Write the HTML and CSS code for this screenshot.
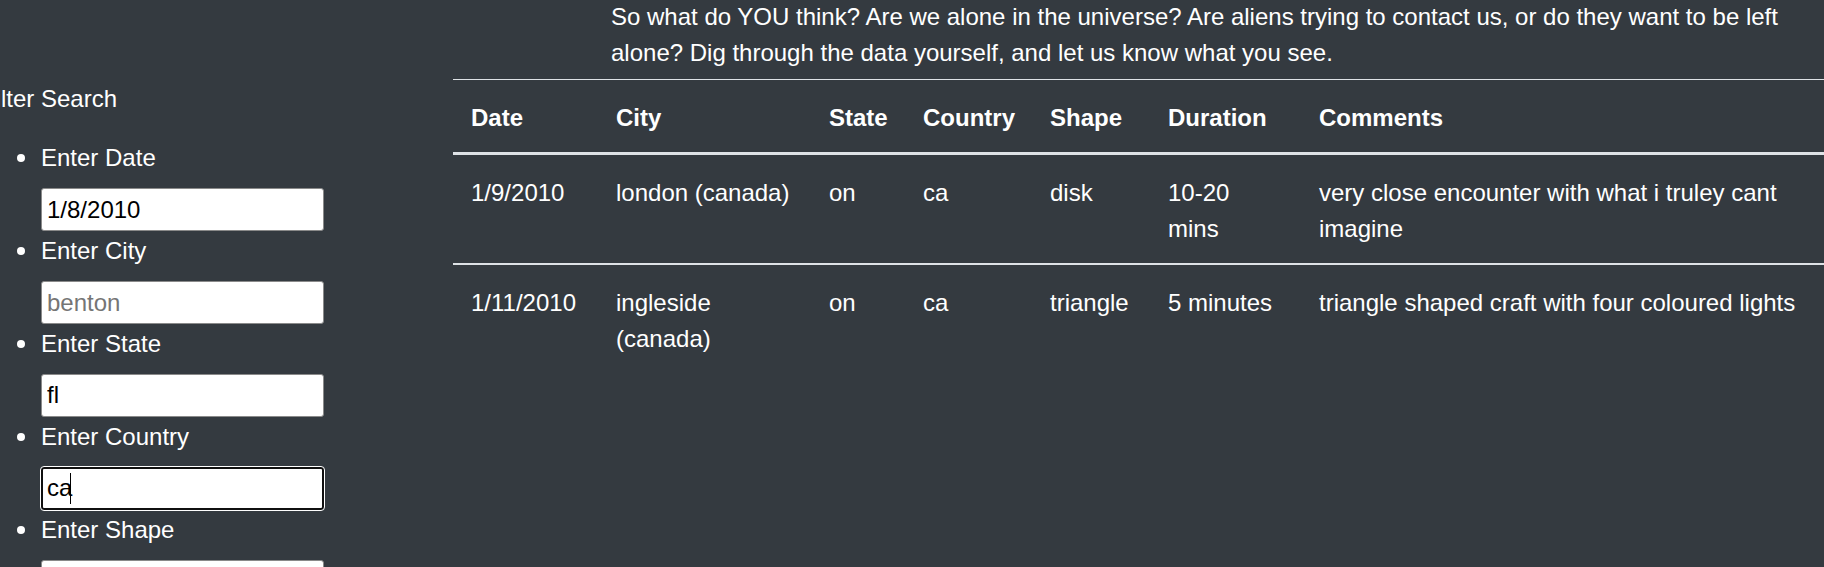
FILE: index.html
```html
<!DOCTYPE html>
<html lang="en">
<head>
<meta charset="utf-8">
<title>UFO Sightings</title>
<link rel="stylesheet" href="styles.css">
</head>
<body>
<div class="page">
  <section class="intro">
    <p>So what do YOU think? Are we alone in the universe? Are aliens trying to contact us, or do they want to be left alone? Dig through the data yourself, and let us know what you see.</p>
  </section>
  <div class="main">
    <aside class="filters">
      <div class="filters-title">Filter Search</div>
      <ul class="filter-list">
        <li><label for="datetime">Enter Date</label><input id="datetime" class="field" type="text" value="1/8/2010"></li>
        <li><label for="city">Enter City</label><input id="city" class="field" type="text" placeholder="benton"></li>
        <li><label for="state">Enter State</label><input id="state" class="field" type="text" value="fl"></li>
        <li><label for="country">Enter Country</label><span class="field-wrap is-typing"><input id="country" class="field is-focused" type="text" value="ca"></span></li>
        <li><label for="shape">Enter Shape</label><input id="shape" class="field" type="text"></li>
      </ul>
    </aside>
    <div class="results">
      <table class="ufo-table">
        <thead>
          <tr>
            <th class="c-date">Date</th>
            <th class="c-city">City</th>
            <th class="c-state">State</th>
            <th class="c-country">Country</th>
            <th class="c-shape">Shape</th>
            <th class="c-duration">Duration</th>
            <th class="c-comments">Comments</th>
          </tr>
        </thead>
        <tbody>
          <tr>
            <td>1/9/2010</td>
            <td>london (canada)</td>
            <td>on</td>
            <td>ca</td>
            <td>disk</td>
            <td>10-20 mins</td>
            <td>very close encounter with what i truley cant imagine</td>
          </tr>
          <tr>
            <td>1/11/2010</td>
            <td>ingleside (canada)</td>
            <td>on</td>
            <td>ca</td>
            <td>triangle</td>
            <td>5 minutes</td>
            <td>triangle shaped craft with four coloured lights</td>
          </tr>
        </tbody>
      </table>
    </div>
  </div>
</div>
</body>
</html>
```
FILE: styles.css
```css
html, body {
  margin: 0;
  padding: 0;
  background: #343a40;
  overflow: hidden;
}

body {
  width: 1824px;
  height: 567px;
  font-family: "Liberation Sans", Arial, sans-serif;
  font-size: 24px;
  line-height: 36px;
  color: #ffffff;
}

.page {
  margin-top: -1px;
}

.intro p {
  margin: 0 0 0 611px;
  width: 1200px;
}

.main {
  display: flex;
  align-items: flex-start;
  margin-top: 8px;
}

.filters {
  flex: none;
  width: 472px;
  margin-left: -19px;
}

.filters-title {
  padding-top: 1.5px;
}

.filter-list {
  margin: 22px 0 0;
  padding-left: 60px;
  list-style: none;
}

.filter-list li {
  position: relative;
}

.filter-list li::before {
  content: "";
  position: absolute;
  left: -24px;
  top: 15.5px;
  width: 8px;
  height: 8px;
  border-radius: 50%;
  background: #ffffff;
}

.filter-list label {
  display: block;
  height: 36px;
  padding-top: 1.25px;
}

.field {
  display: block;
  box-sizing: border-box;
  width: 283px;
  height: 43.7px;
  margin: 12px 0 0;
  padding: 0 5px;
  border: 1px solid #8a8a8a;
  border-radius: 3px;
  background: #ffffff;
  font-family: "Liberation Sans", Arial, sans-serif;
  font-size: 24px;
  color: #000000;
}

.field::placeholder {
  color: #757575;
}

.field-wrap {
  display: block;
  position: relative;
  width: 283px;
}

.field.is-focused {
  border: 2px solid #101010;
  outline: 1.5px solid #ffffff;
  outline-offset: 0;
  padding-left: 4px;
}

.is-typing::after {
  content: "";
  position: absolute;
  left: 29px;
  top: 6px;
  width: 1px;
  height: 31px;
  background: #000000;
}

.results {
  flex: none;
}

.ufo-table {
  border-collapse: separate;
  border-spacing: 0;
  table-layout: fixed;
  width: 1409px;
  color: #ffffff;
}

.ufo-table th,
.ufo-table td {
  box-sizing: border-box;
  padding: 19.5px 18px 16.5px;
  text-align: left;
  vertical-align: top;
}

.ufo-table th {
  font-weight: 700;
  border-top: 1px solid #dee2e6;
  border-bottom: 3px solid #dee2e6;
}

.ufo-table tbody tr + tr td {
  border-top: 2px solid #dee2e6;
}

.c-date { width: 145px; }
.c-city { width: 213px; }
.c-state { width: 94px; }
.c-country { width: 127px; }
.c-shape { width: 118px; }
.c-duration { width: 151px; }
.c-comments { width: 561px; }
```
